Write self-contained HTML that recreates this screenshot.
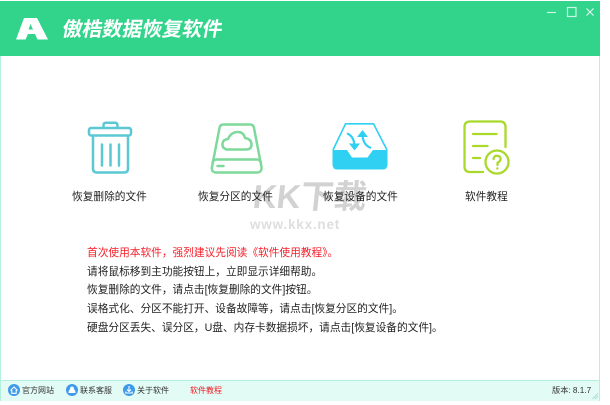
<!DOCTYPE html>
<html lang="zh">
<head>
<meta charset="utf-8">
<title>傲梏数据恢复软件</title>
<style>
html,body{margin:0;padding:0;background:#fff}
body{width:610px;height:405px;position:relative;overflow:hidden;font-family:"Liberation Sans","Noto Sans CJK SC",sans-serif;color:#222}
.abs{position:absolute;white-space:nowrap}
#win{position:absolute;left:0;top:1px;width:598px;height:399px;border:1px solid #b5efdf;border-top:0;background:#fff}
#bar{position:absolute;left:0;top:1px;width:600px;height:55px;background:#32d48c}
#title{left:60px;top:16px;font-size:20px;line-height:28px;font-weight:bold;color:#fff;transform:skewX(-10deg);transform-origin:left bottom;letter-spacing:0}
#status{position:absolute;left:1px;top:380px;width:598px;height:20px;background:#e3fbf5;border-top:1px solid #b5efdf}
.lb{font-size:10.7px;line-height:14px;top:190px;color:#222}
.t{font-size:10.7px;line-height:14px;left:87px;color:#222}
.f{font-size:8px;line-height:12px;top:385px;color:#333}
svg{position:absolute;left:0;top:0}
</style>
</head>
<body>
<div id="win"></div>
<div id="bar"></div>
<div id="status"></div>

<svg width="610" height="405" viewBox="0 0 610 405">
  <!-- logo -->
  <path fill-rule="evenodd" d="M24 18H37L48 39.500H37.500L35 34H28L25.500 39.500H16ZM30.500 24L28.500 29.500H33Z" fill="#fff"/>
  <!-- window buttons -->
  <path d="M547 12.500H556" stroke="#c9f5e2" stroke-width="1.200" fill="none"/>
  <rect x="567.500" y="7.500" width="8.500" height="9" stroke="#c9f5e2" stroke-width="1.200" fill="none"/>
  <path d="M586.500 8.500L593.500 15.500M593.500 8.500L586.500 15.500" stroke="#e2faf0" stroke-width="1.200" fill="none"/>

  <!-- trash -->
  <g fill="none" stroke="#5cc8d4" stroke-width="2.500" stroke-linecap="round" stroke-linejoin="round">
    <rect x="89" y="128" width="42" height="7.500" rx="2"/>
    <path d="M103.500 127.500V125.500Q103.500 122.800 106 122.800H115Q117.500 122.800 117.500 125.500V127.500"/>
    <path d="M93 136V168.500Q93 172.500 97 172.500H124Q128 172.500 128 168.500V136"/>
    <path d="M102 144.500V165.500M110.500 144.500V165.500M119 144.500V165.500"/>
  </g>

  <!-- drive -->
  <g fill="none" stroke="#7fd99c" stroke-width="2.500" stroke-linecap="round" stroke-linejoin="round">
    <path d="M219.500 128Q220 124.500 223.500 124.500H250Q253.500 124.500 254 128L261.500 167Q262 172.500 257 172.500H216.500Q211 172.500 212 167Z"/>
    <path d="M212.500 163Q213 159.500 217 159.500H256.500Q260.500 159.500 261 163"/>
    <path d="M217.500 166H223.500"/>
    <path d="M227 149.500Q222 148.500 222.500 143.500Q223 139.500 228 139Q231 132 238 132Q243.500 132 245 138Q251.500 139 251.500 144.500Q251.500 149.500 246 149.500Z"/>
  </g>

  <!-- inbox -->
  <path d="M332.500 150H347L352 157.500H367.500L373 150H387.500V164.500Q387.500 169.500 382.500 169.500H337.500Q332.500 169.500 332.500 164.500Z" fill="#2fd0f2"/>
  <path d="M333 150L345.500 123.800H373.500L387 150" fill="none" stroke="#2fd0f2" stroke-width="1.600" stroke-linejoin="round"/>
  <g fill="none" stroke="#2fd0f2" stroke-width="2.200">
    <path d="M347 133.500Q354 136 354.500 146"/>
    <path d="M371 148Q363 145 362.500 135"/>
  </g>
  <path d="M349 143.500H360L354.500 150.500Z" fill="#2fd0f2"/>
  <path d="M357 137H368L362.500 130Z" fill="#2fd0f2"/>

  <!-- doc -->
  <g fill="none" stroke="#a9d92b" stroke-width="2.300" stroke-linecap="round" stroke-linejoin="round">
    <path d="M483 172H470Q464.500 172 464.500 166.500V127Q464.500 121.500 470 121.500H500Q505.500 121.500 505.500 127V147"/>
    <path d="M473 134H496.500M473 146H487.500M473 158H480"/>
    <circle cx="497" cy="162" r="11.500"/>
    <path d="M493.500 159Q494 155.500 497.500 155.800Q501 156.200 500.500 159.500Q500 161.500 497.500 163V165"/>
  </g>
  <circle cx="497.300" cy="168.500" r="1.200" fill="#a9d92b"/>

  <!-- footer icons -->
  <circle cx="14" cy="390" r="6" fill="#3d9be9"/>
  <path d="M10.500 390.500L14 387L17.500 390.500M11.800 390V393.300H16.200V390" fill="none" stroke="#fff" stroke-width="1.100"/>
  <circle cx="72" cy="390" r="6" fill="#3d9be9"/>
  <path d="M68.500 393Q68.500 390 70 389.500Q70 386.500 72 386.500Q74 386.500 74 389.500Q75.500 390 75.500 393Z" fill="#fff"/>
  <circle cx="129" cy="390" r="6" fill="#3d9be9"/>
  <path d="M129 386V391M127 389.500L129 391.500L131 389.500M125.800 391.500V393H132.200V391.500" fill="none" stroke="#fff" stroke-width="1.100"/>

  <!-- resize grip -->
  <path d="M592.500 399L598 393.500M595 399L598 396" stroke="#a8dfd0" stroke-width="1" fill="none"/>
</svg>

<div id="title" class="abs">傲梏数据恢复软件</div>

<!-- watermark -->
<div class="abs" style="left:253px;top:176px;font-size:33px;line-height:42px;font-weight:bold;color:#d2d2d2;transform:skewX(-6deg)">KK下载</div>
<div class="abs" style="left:250px;top:217px;font-size:13.500px;line-height:16px;font-weight:bold;color:#dedede;letter-spacing:.8px">www.kkx.net</div>

<div class="abs lb" style="left:72px">恢复删除的文件</div>
<div class="abs lb" style="left:198px">恢复分区的文件</div>
<div class="abs lb" style="left:323px">恢复设备的文件</div>
<div class="abs lb" style="left:465px">软件教程</div>

<div class="abs t" style="top:246px;color:#f5202a">首次使用本软件，强烈建议先阅读《软件使用教程》。</div>
<div class="abs t" style="top:265px">请将鼠标移到主功能按钮上，立即显示详细帮助。</div>
<div class="abs t" style="top:283px">恢复删除的文件，请点击[恢复删除的文件]按钮。</div>
<div class="abs t" style="top:302px">误格式化、分区不能打开、设备故障等，请点击[恢复分区的文件]。</div>
<div class="abs t" style="top:321px">硬盘分区丢失、误分区，U盘、内存卡数据损坏，请点击[恢复设备的文件]。</div>

<div class="abs f" style="left:22px">官方网站</div>
<div class="abs f" style="left:80px">联系客服</div>
<div class="abs f" style="left:137px">关于软件</div>
<div class="abs f" style="left:190px;color:#f01c24">软件教程</div>
<div class="abs f" style="left:552px;font-size:8.200px">版本: 8.1.7</div>
</body>
</html>
